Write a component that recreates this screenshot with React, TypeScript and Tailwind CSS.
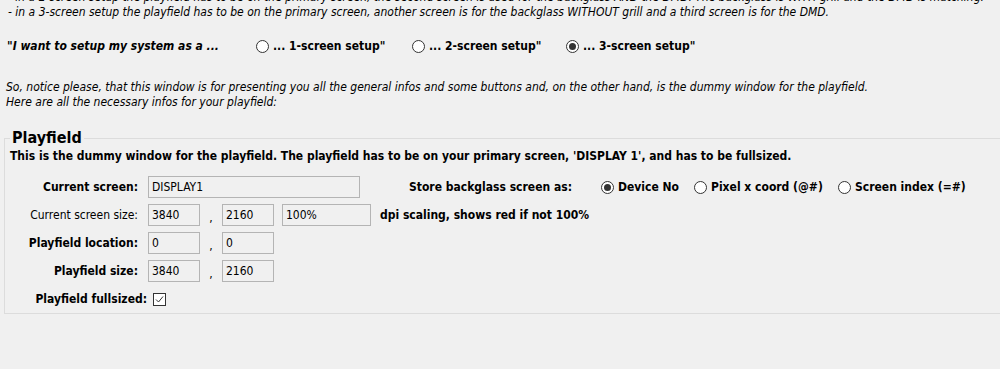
import React from "react";

const FONT = "font-['Tahoma','DejaVu_Sans_Condensed','DejaVu_Sans',sans-serif]";

function Radio({ checked, label, w }: { checked?: boolean; label: string; w?: string }) {
  return (
    <span className={"flex shrink-0 items-center gap-[4px] whitespace-nowrap " + (w ?? "")}>
      <span className="flex h-[13px] w-[13px] shrink-0 items-center justify-center rounded-full border border-[#333] bg-white">
        {checked && <span className="h-[7px] w-[7px] rounded-full bg-[#333]" />}
      </span>
      <span>{label}</span>
    </span>
  );
}

function Field({ value, w }: { value: string; w: string }) {
  return (
    <div
      className={
        "flex h-[22px] shrink-0 items-center border border-[#b4b4b4] bg-[#f0f0f0] px-[3px] text-[12px] " + w
      }
    >
      {value}
    </div>
  );
}

function Comma() {
  return <span className="h-[22px] w-[22px] shrink-0 pt-[5px] text-center leading-[18px]">,</span>;
}

export default function App() {
  return (
    <div
      className={
        "h-[369px] w-[1000px] overflow-hidden whitespace-nowrap bg-[#f0f0f0] text-[12px] text-black " + FONT
      }
    >
      {/* intro lines, first one cut off at the top */}
      <div className="-mt-[10px] pl-[8px] italic leading-[15px]">
        <p>
          - in a 2-screen setup the playfield has to be on the primary screen, the second screen is used for the
          backglass AND the DMD. The backglass is WITH grill and the DMD is matching.
        </p>
        <p>
          - in a 3-screen setup the playfield has to be on the primary screen, another screen is for the backglass
          WITHOUT grill and a third screen is for the DMD.
        </p>
      </div>

      <div className="mt-[17px] flex items-center pl-[7px] font-bold">
        <span className="w-[249px] shrink-0 italic">"I want to setup my system as a ...</span>
        <Radio w="w-[156px]" label={'... 1-screen setup"'} />
        <Radio w="w-[154px]" label={'... 2-screen setup"'} />
        <Radio checked label={'... 3-screen setup"'} />
      </div>

      <div className="mt-[25px] pl-[6px] italic leading-[15px]">
        <p>
          So, notice please, that this window is for presenting you all the general infos and some buttons and, on
          the other hand, is the dummy window for the playfield.
        </p>
        <p>Here are all the necessary infos for your playfield:</p>
      </div>

      <fieldset className="ml-[4px] mt-[19px] h-[185px] w-[1020px] border border-[#dcdcdc] pl-[5px]">
        <legend className="px-[2px] text-[16px] font-bold leading-[18px]">Playfield</legend>
        <p className="font-bold">
          This is the dummy window for the playfield. The playfield has to be on your primary screen, 'DISPLAY 1',
          and has to be fullsized.
        </p>

        <div className="mt-[11px] flex flex-col gap-[6px]">
          <div className="flex h-[22px] items-center">
            <span className="w-[138px] shrink-0 pr-[10px] text-right font-bold">Current screen:</span>
            <Field value="DISPLAY1" w="w-[212px]" />
            <div className="ml-[49px] flex items-center font-bold">
              <span className="w-[192px] shrink-0">Store backglass screen as:</span>
              <Radio w="w-[93px]" checked label="Device No" />
              <Radio w="w-[144px]" label="Pixel x coord (@#)" />
              <Radio label="Screen index (=#)" />
            </div>
          </div>
          <div className="flex h-[22px] items-center">
            <span className="w-[138px] shrink-0 pr-[10px] text-right">Current screen size:</span>
            <Field value="3840" w="w-[52px]" />
            <Comma />
            <Field value="2160" w="w-[52px]" />
            <div className="ml-[8px]">
              <Field value="100%" w="w-[89px]" />
            </div>
            <span className="ml-[9px] font-bold">dpi scaling, shows red if not 100%</span>
          </div>
          <div className="flex h-[22px] items-center">
            <span className="w-[138px] shrink-0 pr-[10px] text-right font-bold">Playfield location:</span>
            <Field value="0" w="w-[52px]" />
            <Comma />
            <Field value="0" w="w-[52px]" />
          </div>
          <div className="flex h-[22px] items-center">
            <span className="w-[138px] shrink-0 pr-[10px] text-right font-bold">Playfield size:</span>
            <Field value="3840" w="w-[52px]" />
            <Comma />
            <Field value="2160" w="w-[52px]" />
          </div>
          <div className="flex h-[22px] items-center">
            <span className="w-[143px] shrink-0 pr-[6px] text-right font-bold">Playfield fullsized:</span>
            <span className="flex h-[13px] w-[13px] items-center justify-center border border-[#333] bg-white">
              <svg width="11" height="11" viewBox="0 0 11 11">
                <path d="M2 5.5 L4.5 8 L9 2.5" fill="none" stroke="#333" strokeWidth="1" />
              </svg>
            </span>
          </div>
        </div>
      </fieldset>
    </div>
  );
}
